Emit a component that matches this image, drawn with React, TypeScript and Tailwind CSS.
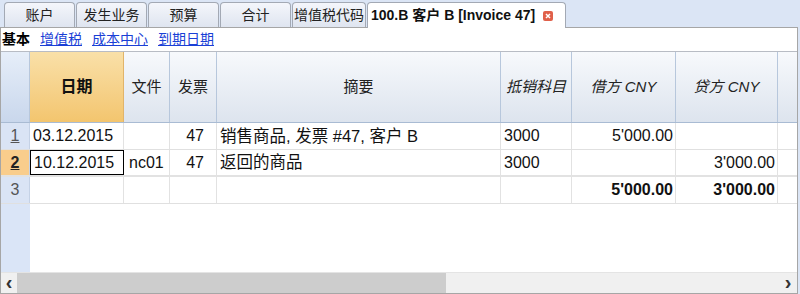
import React from "react";

const font = { fontFamily: '"Liberation Sans", "Noto Sans CJK SC", sans-serif' };

function Tab({ label, w }: { label: string; w: string }) {
  return (
    <div
      className={`${w} h-[25px] flex items-center justify-center whitespace-nowrap rounded-t-[4px] border border-b-0 border-[#a3a9b4] bg-gradient-to-b from-[#f4f6fb] to-[#dfe5f0] text-[14px] text-[#222]`}
    >
      {label}
    </div>
  );
}

type Row = {
  n: string;
  date: string;
  doc: string;
  inv: string;
  desc: string;
  acc: string;
  debit: string;
  credit: string;
  active?: boolean;
  total?: boolean;
};

const rows: Row[] = [
  { n: "1", date: "03.12.2015", doc: "", inv: "47", desc: "销售商品, 发票 #47, 客户 B", acc: "3000", debit: "5'000.00", credit: "" },
  { n: "2", date: "10.12.2015", doc: "nc01", inv: "47", desc: "返回的商品", acc: "3000", debit: "", credit: "3'000.00", active: true },
  { n: "3", date: "", doc: "", inv: "", desc: "", acc: "", debit: "5'000.00", credit: "3'000.00", total: true },
];

export default function App() {
  return (
    <div className="w-[800px] h-[294px] bg-[#dbe5f5] flex flex-col overflow-hidden" style={font}>
      {/* tab bar */}
      <div className="h-[27px] flex items-end pl-[4px] gap-[1px] shrink-0">
        <Tab label="账户" w="w-[71px]" />
        <Tab label="发生业务" w="w-[71px]" />
        <Tab label="预算" w="w-[71px]" />
        <Tab label="合计" w="w-[71px]" />
        <Tab label="增值税代码" w="w-[74px]" />
        <div className="w-[199px] h-[26px] -mb-px relative z-10 flex items-center pl-[3px] gap-[8px] whitespace-nowrap rounded-t-[4px] border border-b-0 border-[#a3a9b4] bg-white text-[14px] font-bold text-[#111]">
          <span>100.B 客户 B [Invoice 47]</span>
          <span className="w-[10px] h-[10px] rounded-[2px] bg-[#e0604a] flex items-center justify-center">
            <svg width="6" height="6" viewBox="0 0 6 6">
              <path d="M1 1L5 5M5 1L1 5" stroke="white" strokeWidth="1.5" />
            </svg>
          </span>
        </div>
      </div>

      {/* panel */}
      <div className="w-[798px] h-[267px] flex flex-col border border-[#a6a6a6] bg-white">
        {/* sub tabs */}
        <div className="h-[23px] flex items-center pl-[1px] gap-[10px] text-[14px] shrink-0">
          <span className="font-bold text-black">基本</span>
          <span className="text-[#1a3fd6] underline">增值税</span>
          <span className="text-[#1a3fd6] underline">成本中心</span>
          <span className="text-[#1a3fd6] underline">到期日期</span>
        </div>

        {/* grid header */}
        <div className="h-[72px] flex border-t border-b border-t-[#b8bcc4] border-b-[#a9bbd3] shrink-0">
          <div className="w-[29px] border-r border-[#b7c7dc] bg-gradient-to-b from-[#e6eef9] to-[#c9d7ec]" />
          <div className="w-[94px] border-r border-[#e1b46a] bg-gradient-to-b from-[#f9e0a8] to-[#f3c56e] flex items-center justify-center text-[16px] font-bold text-[#111]">
            日期
          </div>
          <HeadCell w="w-[46px]">文件</HeadCell>
          <HeadCell w="w-[47px]">发票</HeadCell>
          <HeadCell w="w-[284px]">摘要</HeadCell>
          <HeadCell w="w-[71px]" italic>
            抵销科目
          </HeadCell>
          <HeadCell w="w-[104px]" italic>
            借方 CNY
          </HeadCell>
          <HeadCell w="w-[102px]" italic>
            贷方 CNY
          </HeadCell>
          <div className="flex-1 bg-gradient-to-b from-[#f7f9fc] to-[#dde4ee]" />
        </div>

        {rows.map((r) => (
          <div
            key={r.n}
            className={`flex shrink-0 h-[27px] ${r.active ? "border-b-2 border-[#e2e2e2]" : "border-b border-[#e0e0e0]"} text-[16px] text-[#111]`}
          >
            <div
              className={`w-[29px] border-r border-[#c5d2e6] flex items-center justify-center ${r.active ? "bg-[#f9cd8c] font-bold text-[#222]" : "bg-[#dae4f5] text-[#555]"} ${r.total ? "" : "underline"}`}
            >
              {r.n}
            </div>
            <div
              className={`w-[94px] flex items-center pl-[3px] ${r.active ? "border border-black" : "border-r border-[#e2e2e2]"}`}
            >
              {r.date}
            </div>
            <div className="w-[46px] border-r border-[#e2e2e2] flex items-center pl-[5px]">{r.doc}</div>
            <div className="w-[47px] border-r border-[#e2e2e2] flex items-center justify-end pr-[12px]">{r.inv}</div>
            <div className="w-[284px] border-r border-[#e2e2e2] flex items-center pl-[3px] text-[16.5px] whitespace-nowrap">
              {r.desc}
            </div>
            <div className="w-[71px] border-r border-[#e2e2e2] flex items-center pl-[3px]">{r.acc}</div>
            <div className={`w-[104px] border-r border-[#e2e2e2] flex items-center justify-end pr-[2px] ${r.total ? "font-bold" : ""}`}>
              {r.debit}
            </div>
            <div className={`w-[102px] border-r border-[#e2e2e2] flex items-center justify-end pr-[2px] ${r.total ? "font-bold" : ""}`}>
              {r.credit}
            </div>
            <div className="flex-1" />
          </div>
        ))}

        {/* empty area */}
        <div className="flex-1 min-h-0 flex">
          <div className="w-[29px] bg-[#dae5f7]" />
          <div className="flex-1" />
        </div>

        {/* scrollbar */}
        <div className="h-[21px] shrink-0 flex bg-[#f0f0f0] border-t border-[#e4e4e4] text-[#333] text-[20px] leading-[18px] font-bold">
          <span className="w-[16px] shrink-0 text-center">‹</span>
          <span className="w-[429px] shrink-0 bg-[#cdcdcd]" />
          <span className="flex-1" />
          <span className="w-[18px] shrink-0 text-center">›</span>
        </div>
      </div>
    </div>
  );
}

function HeadCell({ w, italic, children }: { w: string; italic?: boolean; children: React.ReactNode }) {
  return (
    <div
      className={`${w} border-r border-[#b7c7dc] bg-gradient-to-b from-[#f7f9fc] to-[#dde4ee] flex items-center justify-center text-[15px] text-[#222] ${italic ? "italic" : ""}`}
    >
      {children}
    </div>
  );
}
